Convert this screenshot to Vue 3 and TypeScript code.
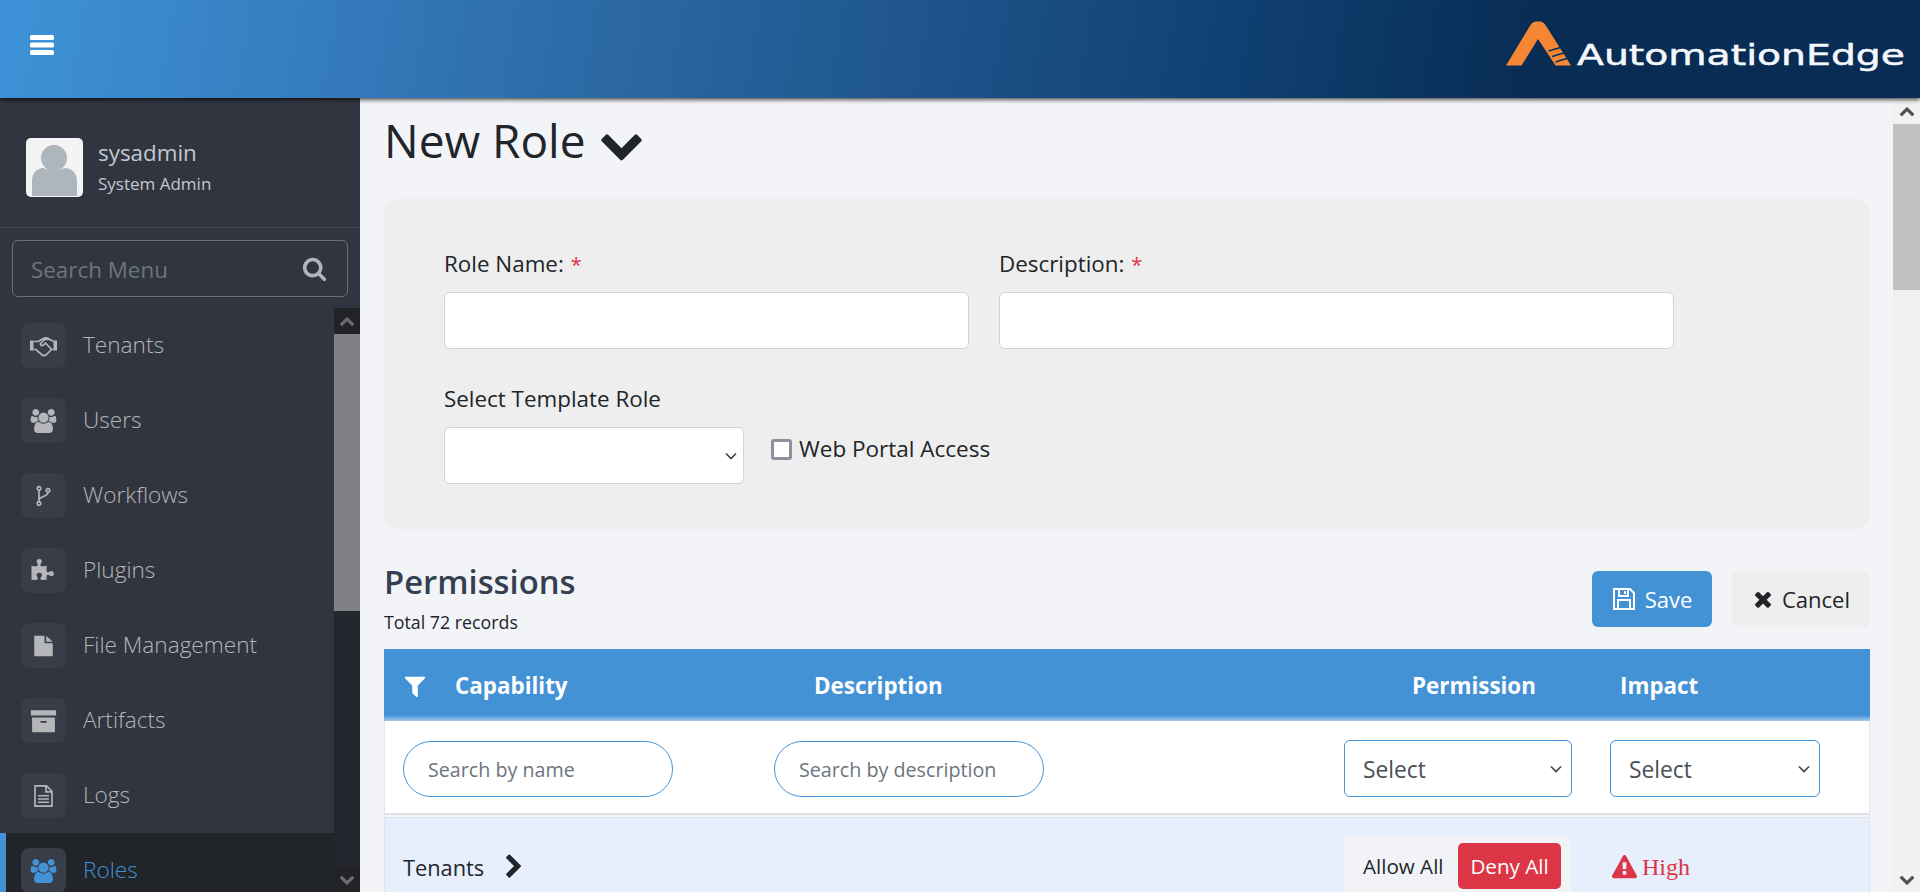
<script setup lang="ts">
interface Item { label: string; vb: string; d: string; stroke?: string; active?: boolean }
const USERS = 'M593 896q-162 5-265 128h-134q-82 0-138-40.5t-56-118.5q0-353 124-353 6 0 43.5 21t97.5 42.5 119 21.5q67 0 133-23-5 37-5 66 0 139 81 256zm1071 637q0 120-73 189.5t-194 69.5h-874q-121 0-194-69.5t-73-189.5q0-53 3.5-103.5t14-109 26.5-108.5 43-97.5 62-81 85.5-53.5 111.5-20q10 0 43 21.5t73 48 107 48 135 21.5 135-21.5 107-48 73-48 43-21.5q61 0 111.5 20t85.5 53.5 62 81 43 97.5 26.5 108.5 14 109 3.5 103.5zm-1024-1277q0 106-75 181t-181 75-181-75-75-181 75-181 181-75 181 75 75 181zm704 384q0 159-112.5 271.5t-271.5 112.5-271.5-112.5-112.5-271.5 112.5-271.5 271.5-112.5 271.5 112.5 112.5 271.5zm576 225q0 78-56 118.5t-138 40.5h-134q-103-123-265-128 81-117 81-256 0-29-5-66 66 23 133 23 59 0 119-21.5t97.5-42.5 43.5-21q124 0 124 353zm-128-609q0 106-75 181t-181 75-181-75-75-181 75-181 181-75 181 75 75 181z'
const items: Item[] = [
  {
    label: 'Tenants', vb: '0 0 27 24',
    d: 'M0 6.500h3.500v10H0zM23.500 6.500H27v10h-3.500z',
    stroke: 'M3.500 7.500H8L12.500 5C15 3.500 17 3.500 19 5L23.500 7.500M3.500 15.500H6L11.500 20.500C13 21.800 15 21.800 16.500 20.500L21.500 15.500H23.500M19 5.500H14.500L10.500 9.500C10 11.500 12 12 13.500 11L15.500 9 21.500 15.500',
  },
  { label: 'Users', vb: '0 0 1920 1792', d: USERS },
  {
    label: 'Workflows', vb: '0 0 27 24', d: '',
    stroke: 'M9 2.700a1.800 1.800 0 1 1-.01 0zM18 4.700a1.800 1.800 0 1 1-.01 0zM9 17.700a1.800 1.800 0 1 1-.01 0zM9 6.300V17.700M18 8.300C18 13 9.500 12 9 16',
  },
  { label: 'Plugins', vb: '0 0 1792 1792', d: 'M1664 1098q0 81-44.500 135t-123.500 54q-41 0-77.500-17.500t-59-38-56.500-38-71-17.500q-110 0-110 124 0 39 16 115t15 115v5q-22 0-33 1-34 3-97.500 11.500t-115.500 13.500-98 5q-61 0-103-26.500t-42-83.500q0-37 17.500-71t38-56.500 38-59 17.500-77.500q0-79-54-123.500t-135-44.500q-84 0-143 45.500t-59 127.500q0 43 15 83t33.500 64.500 33.500 53 15 50.500q0 45-46 89-37 35-117 35-95 0-245-24-9-2-27.500-4t-27.500-4l-13-2q-1 0-3-1-2 0-2-1v-1024q2 1 17.500 3.500t34 5 21.500 3.500q150 24 245 24 80 0 117-35 46-44 46-89 0-22-15-50.500t-33.500-53-33.500-64.500-15-83q0-82 59-127.500t144-45.500q80 0 134 44.500t54 123.500q0 41-17.500 77.500t-38 59-38 56.500-17.500 71q0 57 42 83.500t103 26.500q64 0 180-15t163-17v2q-1 2-3.500 17.500t-5 34-3.500 21.500q-24 150-24 245 0 80 35 117 44 46 89 46 22 0 50.500-15t53-33.500 64.500-33.500 83-15q82 0 127.500 59t45.500 143z' },
  { label: 'File Management', vb: '0 0 20 22', d: 'M1.500 1.500H11v7h7.500v11.200c0 .5-.3.800-.8.800H2.300c-.5 0-.8-.3-.8-.8zM12.500 1.500l6 5.500h-6z' },
  { label: 'Artifacts', vb: '0 0 22 20', d: 'M.5 1h21v4.500H.5zM1.500 7h19v11.500c0 .5-.3.800-.8.800H2.300c-.5 0-.8-.3-.8-.8zM8.500 10v1.500h5V10z' },
  { label: 'Logs', vb: '0 0 20 22', d: 'M1.500 1h11.500l5.500 5.500V21h-17zM3 2.500v17h14V8h-5.500V2.500zM13 3v3.500h3.500zM5 10h10v1.500H5zM5 13h10v1.500H5zM5 16h10v1.500H5z' },
  { label: 'Roles', vb: '0 0 1920 1792', d: USERS, active: true },
]
const CHEV_DOWN = 'M1683 808l-742 741q-19 19-45 19t-45-19l-742-741q-19-19-19-45.500t19-45.500l166-166q19-19 45-19t45 19l531 531 531-531q19-19 45-19t45 19l166 166q19 19 19 45.500t-19 45.500z'
const CHEV_RIGHT = 'M1363 877l-742 742q-19 19-45 19t-45-19l-166-166q-19-19-19-45t19-45l531-531-531-531q-19-19-19-45t19-45l166-166q19-19 45-19t45 19l742 742q19 19 19 45t-19 45z'
const SEARCH = 'M1216 832q0-185-131.500-316.500t-316.500-131.500-316.500 131.500-131.500 316.500 131.500 316.500 316.500 131.500 316.500-131.500 131.500-316.500zm512 832q0 52-38 90t-90 38q-54 0-90-38l-343-342q-179 124-399 124-143 0-273.500-55.500t-225-150-150-225-55.500-273.500 55.500-273.500 150-225 225-150 273.500-55.500 273.500 55.500 225 150 150 225 55.500 273.500q0 220-124 399l343 343q37 37 37 90z'
const TIMES = 'M1490 1322q0 40-28 68l-136 136q-28 28-68 28t-68-28l-294-294-294 294q-28 28-68 28t-68-28l-136-136q-28-28-28-68t28-68l294-294-294-294q-28-28-28-68t28-68l136-136q28-28 68-28t68 28l294 294 294-294q28-28 68-28t68 28l136 136q28 28 28 68t-28 68l-294 294 294 294q28 28 28 68z'
const FILTER = 'M1595 295q17 41-14 70l-493 493v742q0 42-39 59-13 5-25 5-27 0-45-19l-256-256q-19-19-19-45v-486l-493-493q-31-29-14-70 17-39 59-39h1280q42 0 59 39z'
const WARN = 'M1024 1375v-190q0-14-9.500-23.500t-22.500-9.500h-192q-13 0-22.500 9.500t-9.500 23.500v190q0 14 9.500 23.500t22.500 9.500h192q13 0 22.500-9.500t9.500-23.500zm-2-374l18-459q0-12-10-19-13-11-24-11h-220q-11 0-24 11-10 7-10 21l17 457q0 10 10 16.500t24 6.500h185q14 0 23.500-6.500t10.500-16.500zm-14-934l768 1408q35 63-2 126-17 29-46.500 46t-63.500 17h-1536q-34 0-63.500-17t-46.500-46q-37-63-2-126l768-1408q17-31 47-49t65-18 65 18 47 49z'
</script>

<template>
  <div class="app">
    <header class="topbar">
      <svg class="burger" viewBox="0 0 24 20"><path d="M0 1.500Q0 0 1.500 0h21Q24 0 24 1.500v2Q24 5 22.500 5h-21Q0 5 0 3.500zM0 9q0-1.500 1.500-1.500h21Q24 7.500 24 9v2q0 1.500-1.500 1.500h-21Q0 12.500 0 11zM0 16.500Q0 15 1.500 15h21q1.500 0 1.500 1.500v2q0 1.500-1.500 1.500h-21Q0 20 0 18.500z" /></svg>
      <div class="logo">
        <svg class="logo-mark" viewBox="0 0 65 45">
          <path d="M0 44.500 24.500 4Q27 .5 30 .5H34Q37 .5 39.500 4L65 44.500H49.500L32 18 15.500 44.500z" fill="#f58634" />
          <path d="M42.500 30 58 25.500M46 35.500 61 31M49.500 41 64 36.500" stroke="#0a3058" stroke-width="1.700" fill="none" />
        </svg>
        <span class="logo-text">AutomationEdge</span>
      </div>
    </header>

    <div class="body">
      <aside class="sidebar">
        <div class="user">
          <div class="avatar">
            <svg viewBox="0 0 57 59"><circle cx="28" cy="20" r="13" fill="#adb5bd" /><path d="M6 58V44c0-12 8-14 12-14 3 3 17 3 20 0 6 0 13 3 13 14v14z" fill="#adb5bd" /></svg>
          </div>
          <div class="user-text">
            <div class="user-name">sysadmin</div>
            <div class="user-role">System Admin</div>
          </div>
        </div>
        <div class="menu-search">
          <div class="menu-search-box">
            <span class="menu-search-ph">Search Menu</span>
            <svg class="menu-search-icon" viewBox="0 0 1792 1792"><path :d="SEARCH" /></svg>
          </div>
        </div>
        <div class="menu-wrap">
          <nav class="menu">
            <div v-for="it in items" :key="it.label" class="menu-item" :class="{ active: it.active }">
              <span class="menu-icon">
                <svg :viewBox="it.vb">
                  <path v-if="it.d" :d="it.d" fill-rule="evenodd" />
                  <path v-if="it.stroke" :d="it.stroke" class="icon-stroke" />
                </svg>
              </span>
              <span class="menu-label">{{ it.label }}</span>
            </div>
          </nav>
          <div class="side-scroll">
            <div class="side-btn"><svg viewBox="0 0 1792 1792"><path :d="CHEV_DOWN" transform="rotate(180 896 1008)" /></svg></div>
            <div class="side-thumb"></div>
            <div class="side-track"></div>
            <div class="side-btn"><svg viewBox="0 0 1792 1792"><path :d="CHEV_DOWN" /></svg></div>
          </div>
        </div>
      </aside>

      <main class="main">
        <div class="content">
          <div class="page-title">
            <h1>New Role</h1>
            <svg viewBox="0 0 1792 1792"><path :d="CHEV_DOWN" /></svg>
          </div>

          <section class="form-card">
            <div class="form-row">
              <div class="field f-name">
                <label>Role Name: <em>*</em></label>
                <input class="ctl" type="text" />
              </div>
              <div class="field f-desc">
                <label>Description: <em>*</em></label>
                <input class="ctl" type="text" />
              </div>
            </div>
            <div class="form-row row2">
              <div class="field f-tpl">
                <label>Select Template Role</label>
                <select class="ctl arrow"><option></option></select>
              </div>
              <label class="portal"><span class="check"></span>Web Portal Access</label>
            </div>
          </section>

          <div class="perm-head">
            <div>
              <h2>Permissions</h2>
              <div class="total">Total 72 records</div>
            </div>
            <div class="actions">
              <button class="btn save">
                <svg viewBox="0 0 24 24" fill="none" stroke="#fff" stroke-width="2"><path d="M2 2h16l4 4v16H2z" /><path d="M7 2v7h9V2M13 4v3M6 22v-9h12v9" /></svg>
                Save
              </button>
              <button class="btn cancel">
                <svg viewBox="0 0 1792 1792"><path :d="TIMES" /></svg>
                Cancel
              </button>
            </div>
          </div>

          <div class="table">
            <div class="t-head">
              <div class="h-cap">
                <svg class="filter" viewBox="0 0 1792 1792"><path :d="FILTER" /></svg>
                <span>Capability</span>
              </div>
              <div>Description</div>
              <div>Permission</div>
              <div>Impact</div>
            </div>
            <div class="t-filter">
              <div class="cell"><input class="pill" placeholder="Search by name" /></div>
              <div class="cell"><input class="pill" placeholder="Search by description" /></div>
              <div class="cell"><select class="sel arrow w1"><option>Select</option></select></div>
              <div class="cell"><select class="sel arrow w2"><option>Select</option></select></div>
            </div>
            <div class="t-row">
              <div class="cell tenant">
                <span>Tenants</span>
                <svg viewBox="0 0 1792 1792"><path :d="CHEV_RIGHT" /></svg>
              </div>
              <div class="cell"></div>
              <div class="cell">
                <div class="toggle">
                  <span class="allow">Allow All</span>
                  <span class="deny">Deny All</span>
                </div>
              </div>
              <div class="cell high">
                <svg viewBox="0 0 1792 1792"><path :d="WARN" /></svg>
                <span>High</span>
              </div>
            </div>
          </div>
        </div>
        <div class="page-scroll">
          <div class="page-btn"><svg viewBox="0 0 1792 1792"><path :d="CHEV_DOWN" transform="rotate(180 896 1008)" /></svg></div>
          <div class="page-thumb"></div>
          <div class="page-track"></div>
          <div class="page-btn"><svg viewBox="0 0 1792 1792"><path :d="CHEV_DOWN" /></svg></div>
        </div>
      </main>
    </div>
  </div>
</template>

<style>
html, body { margin: 0; overflow: hidden; }
</style>

<style scoped>
* { box-sizing: border-box; }
.app {
  width: 1920px; height: 892px; overflow: hidden; display: flex; flex-direction: column;
  font-family: "Open Sans", "Noto Sans", sans-serif; color: #212529; background: #f3f4f8;
}
.topbar {
  height: 98px; flex: none; display: flex; align-items: center; justify-content: space-between;
  padding: 0 15px 0 30px; position: relative; z-index: 2;
  background: linear-gradient(100deg, #3f92d8 0%, #2d6ba8 30%, #0f3f70 65%, #082c54 80%, #082c54 100%);
  box-shadow: 0 2px 4px rgba(0, 0, 0, .65);
}
.burger { width: 24px; height: 20px; fill: #fff; margin-bottom: 8px; }
.logo { display: flex; align-items: flex-end; gap: 6px; margin-bottom: 12px; }
.logo-mark { width: 65px; height: 45px; }
.logo-text {
  font-family: "DejaVu Sans", sans-serif; font-size: 27.500px; line-height: 30px; color: #f4f7fb; font-weight: 400;
  display: inline-block; width: 328px; margin-bottom: -4px; white-space: nowrap;
  transform: scaleX(1.43); transform-origin: left center; -webkit-text-stroke: .5px #f4f7fb;
}
.body { flex: 1; min-height: 0; display: flex; }
.sidebar { width: 360px; flex: none; background: #31353f; display: flex; flex-direction: column; }
.user { height: 130px; flex: none; display: flex; align-items: center; padding: 9px 0 0 26px; gap: 15px; border-bottom: 1px solid #444852; }
.avatar { width: 57px; height: 59px; background: #f4f4f4; border-radius: 5px; overflow: hidden; }
.avatar svg { display: block; width: 57px; height: 59px; }
.user-name { font-size: 22.400px; line-height: 28px; color: #c2c7d0; margin-top: 1px; }
.user-role { font-size: 17px; line-height: 26px; color: #c2c7d0; margin-top: 4px; }
.menu-search { padding: 12px 12px 11px; flex: none; }
.menu-search-box {
  height: 57px; border: 1px solid #6c7078; border-radius: 6px; display: flex; align-items: center;
  justify-content: space-between; padding: 2px 20px 0 18px;
}
.menu-search-ph { font-size: 22.400px; color: #6c757d; }
.menu-search-icon { width: 25px; height: 25px; fill: #adb5bd; margin-top: -2px; }
.menu-wrap { flex: 1; min-height: 0; display: flex; overflow: hidden; }
.menu { flex: 1; min-width: 0; overflow: hidden; }
.menu-item { height: 75px; display: flex; align-items: center; padding-left: 21px; gap: 17px; color: #b4b6b9; }
.menu-item.active { background: #212429; box-shadow: inset 6px 0 0 #4492d6; color: #4492d6; }
.menu-icon { width: 45px; height: 45px; border-radius: 8px; background: #393d47; display: flex; align-items: center; justify-content: center; }
.menu-icon svg { width: 27px; height: 24px; fill: currentColor; }
.icon-stroke { fill: none; stroke: currentColor; stroke-width: 1.700; }
.menu-label { font-size: 22.600px; font-weight: 300; margin-top: -3px; }
.side-scroll { width: 26px; flex: none; display: flex; flex-direction: column; background: #23262c; }
.side-btn { height: 26px; flex: none; display: flex; align-items: center; justify-content: center; background: #212327; }
.side-btn svg { width: 16px; height: 16px; fill: #6a6c70; }
.side-thumb { height: 277px; flex: none; background: #808185; }
.side-track { flex: 1; }
.main { flex: 1; min-width: 0; display: flex; }
.content { flex: 1; min-width: 0; padding: 0 23px 0 24px; overflow: hidden; }
.page-title { height: 101px; display: flex; align-items: center; gap: 13px; padding-bottom: 15px; }
.page-title h1 { font-size: 46px; font-weight: 400; margin: 0; line-height: 1.2; }
.page-title svg { width: 45px; height: 45px; fill: #212529; margin-top: 4px; }
.form-card { height: 330px; background: #eeeeee; border-radius: 16px; padding: 50px 60px 0; }
.form-row { display: flex; gap: 30px; }
.row2 { margin-top: 35px; align-items: flex-end; gap: 27px; }
.field { display: flex; flex-direction: column; gap: 13px; }
.field label { font-size: 22.400px; line-height: 30px; height: 30px; }
.field em { color: #dc3545; font-style: normal; font-size: 20px; line-height: 20px; margin-left: 1px; }
.f-name { width: 525px; }
.f-desc { width: 675px; }
.f-tpl { width: 300px; }
.ctl { height: 57px; width: 100%; border: 1px solid #ced4da; border-radius: 6px; background-color: #fff; outline: none; }
.ctl.arrow { background-position: right 6px center; }
.arrow {
  appearance: none;
  background-image: url("data:image/svg+xml,%3Csvg xmlns='http://www.w3.org/2000/svg' width='12' height='8' viewBox='0 0 12 8'%3E%3Cpath d='M1 1.500 6 6.500 11 1.500' fill='none' stroke='%23444' stroke-width='1.700'/%3E%3C/svg%3E");
  background-repeat: no-repeat; background-position: right 9px center; background-size: 12px 8px;
}
.portal { display: flex; align-items: center; gap: 7px; font-size: 22.500px; line-height: 30px; margin-bottom: 20px; }
.check { width: 21px; height: 21px; border: 3px solid #8f8f9d; border-radius: 3px; background: #fff; }
.perm-head { display: flex; justify-content: space-between; align-items: flex-start; height: 120px; padding-top: 32px; }
.perm-head h2 { margin: 0; font-size: 32.800px; font-weight: 600; line-height: 42px; color: #343f52; }
.total { font-size: 17.800px; line-height: 24px; margin-top: 7px; }
.actions { display: flex; gap: 20px; margin-top: 10px; }
.btn { height: 56px; border: 0; border-radius: 6px; font: inherit; font-size: 22px; display: flex; align-items: center; gap: 9px; }
.btn svg { width: 24px; height: 24px; }
.save { width: 120px; background: #4492d6; color: #fff; justify-content: center; }
.cancel { width: 138px; background: #eeeeee; color: #212529; justify-content: center; gap: 7px; padding-right: 7px; }
.cancel svg { fill: #212529; }
.t-head { display: grid; grid-template-columns: 430px 598px 208px 1fr; align-items: center; height: 72px; padding-top: 1px; background: linear-gradient(#4492d6 92%, #a4c9ea 100%); color: #fff; font-weight: 700; font-size: 22.400px; }
.h-cap { display: flex; align-items: center; padding-left: 18px; gap: 27px; }
.filter { width: 26px; height: 26px; fill: #fff; }
.t-filter, .t-row { display: grid; grid-template-columns: 371px 570px 266px 1fr; }
.cell { padding-left: 18px; }
.t-filter { height: 94px; background: #fff; border-left: 1px solid #e3e6ec; border-right: 1px solid #e3e6ec; border-bottom: 2px solid #dfe3ea; align-items: center; padding-top: 3px; }
.pill { display: block; width: 270px; height: 56px; border-radius: 28px; border: 1px solid #4492d6; padding: 2px 24px 0; font: inherit; font-size: 19.700px; outline: none; background: #fff; }
.pill::placeholder { color: #6c757d; opacity: 1; }
.sel { display: block; height: 57px; border: 1px solid #4492d6; border-radius: 6px; background-color: #fff; font: inherit; font-size: 22.800px; color: #495057; padding: 2px 0 0 18px; outline: none; }
.w1 { width: 228px; }
.w2 { width: 210px; }
.t-row { height: 90px; margin-top: 2px; background: #e7eefc; border: 1px solid #dfe3ea; align-items: start; padding-top: 18px; }
.tenant { display: flex; align-items: center; gap: 17px; font-size: 21.800px; height: 56px; padding-top: 6px; }
.tenant svg { width: 26px; height: 26px; fill: #212529; }
.toggle { width: 227px; height: 70px; background: #f1f3f6; border-radius: 8px; display: flex; align-items: flex-start; padding: 7px 10px 0 19px; justify-content: space-between; }
.allow { font-size: 20.600px; line-height: 46px; }
.deny { width: 103px; height: 46px; background: #dc3545; color: #fff; border-radius: 5px; font-size: 20.600px; line-height: 46px; text-align: center; }
.high { display: flex; align-items: center; gap: 5px; padding-left: 20px; padding-top: 6px; color: #dc3545; font-family: "Liberation Serif", serif; font-size: 24px; height: 56px; }
.high svg { width: 25px; height: 25px; fill: #dc3545; }
.page-scroll { width: 27px; flex: none; display: flex; flex-direction: column; background: #f1f1f1; }
.page-btn { height: 26px; flex: none; display: flex; align-items: center; justify-content: center; }
.page-btn svg { width: 16px; height: 16px; fill: #505050; }
.page-thumb { height: 166px; flex: none; background: #c1c1c1; }
.page-track { flex: 1; }
</style>
